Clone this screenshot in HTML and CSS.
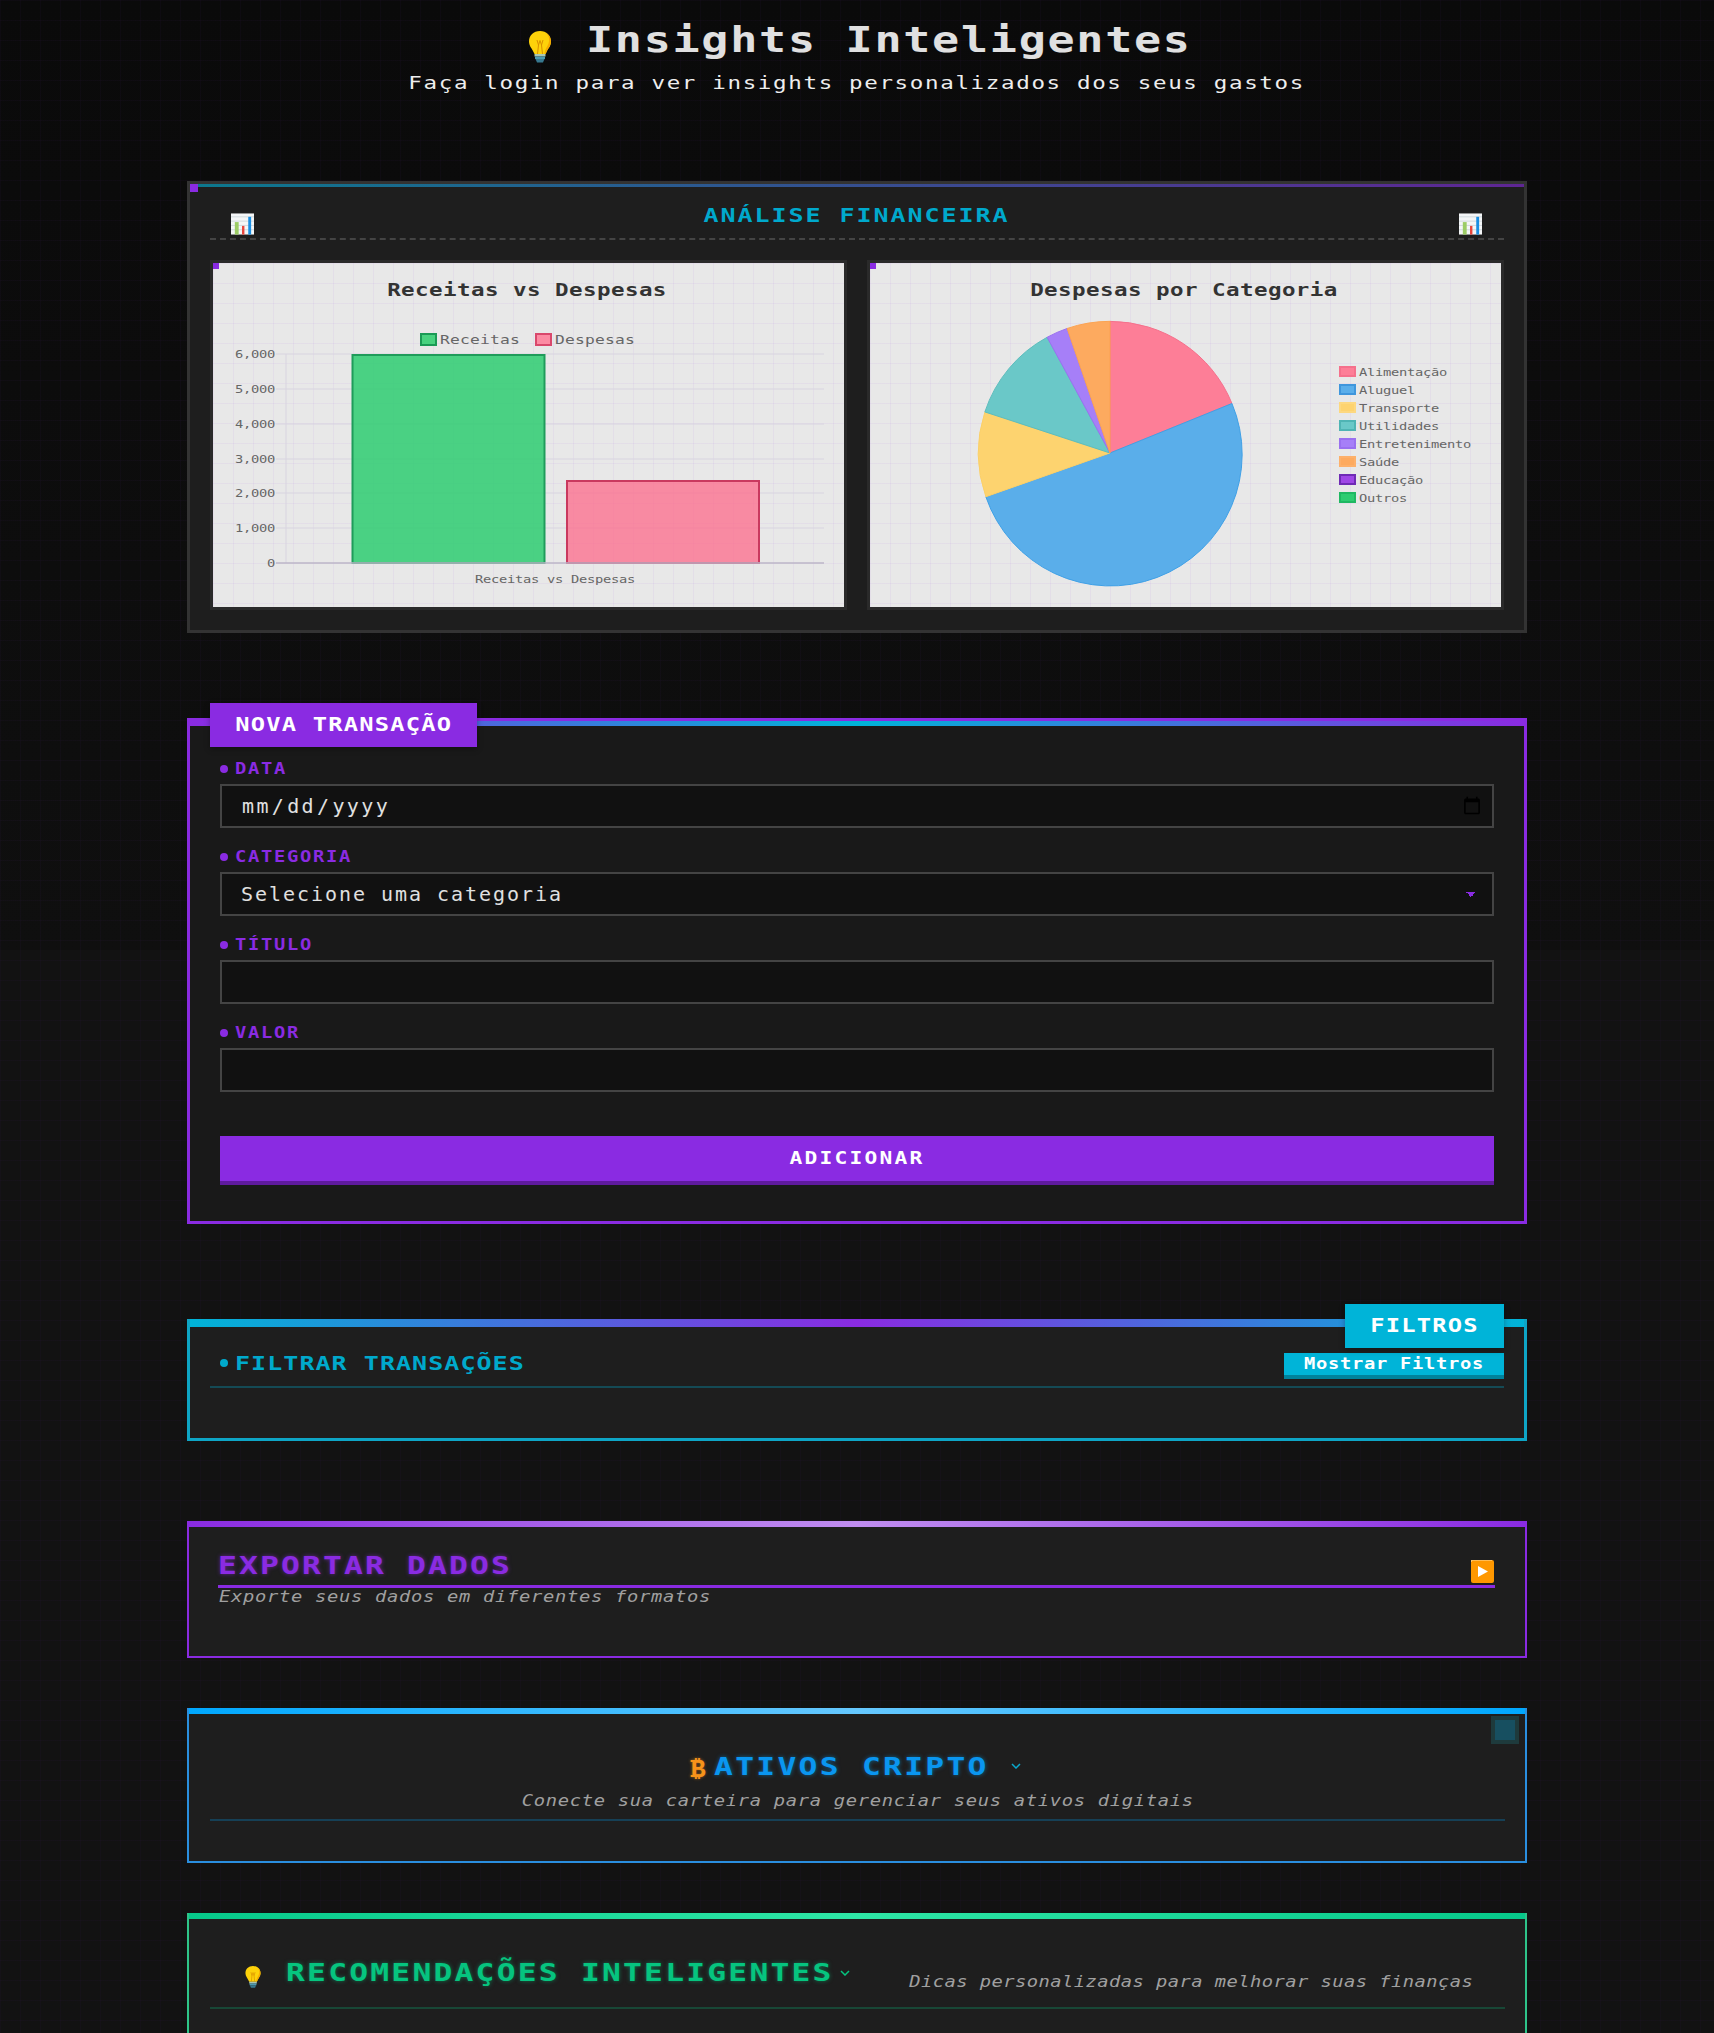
FILE: index.html
```html
<!DOCTYPE html>
<html lang="pt-BR">
<head>
  <meta charset="UTF-8">
  <title>Insights Inteligentes</title>
  <link rel="stylesheet" href="styles.css">
</head>
<body>
  <svg class="defs" width="0" height="0">
    <symbol id="bulb" viewBox="0 0 22 32">
      <path d="M11 0C4.500 0 0 4.500 0 10.500C0 15 3 17.500 4.500 21L5.500 23H16.500L17.500 21C19 17.500 22 15 22 10.500C22 4.500 17.500 0 11 0Z" fill="#fdd20a"/>
      <path d="M16 1.500C20 4 21 8 19.500 12.500C18.500 15.500 16 18 15.500 23H16.500L17.500 21C19 17.500 22 15 22 10.500C22 6.500 19.500 3 16 1.500Z" fill="#f6ab00"/>
      <path d="M8 9L9.500 14L11 9.500L12.500 14L14 9M9.500 14L8.500 23M12.500 14L13.500 23" fill="none" stroke="#d98f00" stroke-width="1"/>
      <rect x="5.500" y="23" width="11" height="2.500" fill="#a9c7b4"/>
      <rect x="6" y="25.500" width="10" height="2.500" fill="#4f9bb0"/>
      <path d="M6.500 28H15.500L14 31.500H8Z" fill="#37788f"/>
    </symbol>
    <symbol id="bars" viewBox="0 0 24 22">
      <rect width="24" height="22" fill="#f4f6f7"/>
      <path d="M0 3.500H24M0 8H24M0 12.500H24M0 17H24" stroke="#cfd8dc" stroke-width="1"/>
      <rect x="4" y="9" width="4" height="13" fill="#9ccc65"/>
      <rect x="11.500" y="13" width="2.500" height="9" fill="#e8453c"/>
      <rect x="18" y="3.500" width="3" height="18.500" fill="#1a8fe3"/>
    </symbol>
  </svg>

  <header class="page-head">
    <h1 class="page-title"><svg class="bulb-big"><use href="#bulb"/></svg><span class="wide">Insights Inteligentes</span></h1>
    <p class="page-sub"><span class="wide wide-center">Faça login para ver insights personalizados dos seus gastos</span></p>
  </header>

  <main class="container">

    <section class="panel analise">
      <div class="analise-head">
        <svg class="bars-icon"><use href="#bars"/></svg>
        <h2 class="analise-title"><span class="wide wide-center">ANÁLISE FINANCEIRA</span></h2>
        <svg class="bars-icon"><use href="#bars"/></svg>
      </div>
      <div class="charts">
        <div class="chart-card">
          <svg class="chart" viewBox="0 0 630 344">
            <text class="chart-title" x="314" y="33">Receitas vs Despesas</text>
            <rect x="208" y="71" width="15" height="11" fill="#48d27f" stroke="#1a9a55" stroke-width="2"/>
            <text class="chart-legend" x="227" y="81">Receitas</text>
            <rect x="323" y="71" width="15" height="11" fill="#fc8ba3" stroke="#d9486c" stroke-width="2"/>
            <text class="chart-legend" x="342" y="81">Despesas</text>
            <g class="chart-grid">
              <path d="M63 91H611M63 126H611M63 161H611M63 196H611M63 230H611M63 265H611"/>
              <path d="M73 91V300"/>
            </g>
            <rect x="139.500" y="92" width="192" height="208" fill="#2ecc71" fill-opacity="0.85" stroke="#1f9c5a" stroke-width="2"/>
            <rect x="354" y="218" width="192" height="82" fill="#ff6384" fill-opacity="0.7" stroke="#c9395f" stroke-width="2"/>
            <path class="chart-axis" d="M63 300H611"/>
            <text class="chart-tick" x="62" y="95">6,000</text>
            <text class="chart-tick" x="62" y="130">5,000</text>
            <text class="chart-tick" x="62" y="165">4,000</text>
            <text class="chart-tick" x="62" y="200">3,000</text>
            <text class="chart-tick" x="62" y="234">2,000</text>
            <text class="chart-tick" x="62" y="269">1,000</text>
            <text class="chart-tick" x="62" y="304">0</text>
            <text class="chart-xlabel" x="342" y="320">Receitas vs Despesas</text>
          </svg>
        </div>
        <div class="chart-card">
          <svg class="chart" viewBox="0 0 630 344">
            <text class="chart-title" x="314" y="33">Despesas por Categoria</text>
            <g class="pie" transform="translate(240 190) scale(0.99)">
              <path d="M0 0L0 -133A133 133 0 0 1 123.200 -50Z" fill="#fd7e97" stroke="#f5708c"/>
              <path d="M0 0L123.200 -50A133 133 0 1 1 -125.400 44.200Z" fill="#5aaeea" stroke="#3fa0e6"/>
              <path d="M0 0L-125.400 44.200A133 133 0 0 1 -126.400 -41.500Z" fill="#fdd36f" stroke="#fbcf68"/>
              <path d="M0 0L-126.400 -41.500A133 133 0 0 1 -63.500 -116.900Z" fill="#6ac8c8" stroke="#5cbcbc"/>
              <path d="M0 0L-63.500 -116.900A133 133 0 0 1 -43.300 -125.800Z" fill="#a67ff8" stroke="#9a70f0"/>
              <path d="M0 0L-43.300 -125.800A133 133 0 0 1 0 -133Z" fill="#fdaa5f" stroke="#fba352"/>
            </g>
            <rect x="470" y="104" width="15" height="9" fill="#fd7e97" stroke="#f5708c" stroke-width="2"/>
            <text class="pie-legend" x="489" y="113">Alimentação</text>
            <rect x="470" y="122" width="15" height="9" fill="#5aaeea" stroke="#3f96dc" stroke-width="2"/>
            <text class="pie-legend" x="489" y="131">Aluguel</text>
            <rect x="470" y="140" width="15" height="9" fill="#fdd36f" stroke="#fdd87f" stroke-width="2"/>
            <text class="pie-legend" x="489" y="149">Transporte</text>
            <rect x="470" y="158" width="15" height="9" fill="#6ac8c8" stroke="#4fb4b4" stroke-width="2"/>
            <text class="pie-legend" x="489" y="167">Utilidades</text>
            <rect x="470" y="176" width="15" height="9" fill="#a67ff8" stroke="#9a70f0" stroke-width="2"/>
            <text class="pie-legend" x="489" y="185">Entretenimento</text>
            <rect x="470" y="194" width="15" height="9" fill="#fdaa5f" stroke="#fdb06a" stroke-width="2"/>
            <text class="pie-legend" x="489" y="203">Saúde</text>
            <rect x="470" y="212" width="15" height="9" fill="#9f47e6" stroke="#6f2bb5" stroke-width="2"/>
            <text class="pie-legend" x="489" y="221">Educação</text>
            <rect x="470" y="230" width="15" height="9" fill="#2ecc71" stroke="#1fb862" stroke-width="2"/>
            <text class="pie-legend" x="489" y="239">Outros</text>
          </svg>
        </div>
      </div>
    </section>

    <section class="panel form-panel">
      <div class="tab tab-form"><span class="wide wide-center">NOVA TRANSAÇÃO</span></div>
      <form>
        <div class="field">
          <label for="data"><i class="dot"></i><span class="wide">DATA</span></label>
          <input type="date" id="data">
        </div>
        <div class="field">
          <label for="categoria"><i class="dot"></i><span class="wide">CATEGORIA</span></label>
          <select id="categoria"><option>Selecione uma categoria</option></select>
        </div>
        <div class="field">
          <label for="titulo"><i class="dot"></i><span class="wide">TÍTULO</span></label>
          <input type="text" id="titulo">
        </div>
        <div class="field">
          <label for="valor"><i class="dot"></i><span class="wide">VALOR</span></label>
          <input type="text" id="valor">
        </div>
        <button type="button" class="btn-add"><span class="wide wide-center">ADICIONAR</span></button>
      </form>
    </section>

    <section class="panel filtros">
      <div class="tab tab-filtros"><span class="wide wide-center">FILTROS</span></div>
      <div class="filtros-head">
        <h3 class="filtros-title"><i class="dot"></i><span class="wide">FILTRAR TRANSAÇÕES</span></h3>
        <button type="button" class="btn-filtros"><span class="wide wide-center">Mostrar Filtros</span></button>
      </div>
    </section>

    <section class="panel exportar">
      <div class="exportar-head">
        <h3 class="exportar-title"><span class="wide">EXPORTAR DADOS</span></h3>
        <svg class="play-icon" viewBox="0 0 23 23">
          <rect width="23" height="23" rx="2" fill="#ff9800"/>
          <path d="M0 2A2 2 0 0 1 2 0H21" fill="none" stroke="#ffc870" stroke-width="1.500"/>
          <path d="M7 6L17 11.500L7 17Z" fill="#fff"/>
        </svg>
      </div>
      <p class="note exportar-note"><span class="wide">Exporte seus dados em diferentes formatos</span></p>
    </section>

    <section class="panel cripto">
      <i class="cripto-toggle"></i>
      <div class="cripto-head">
        <div class="cripto-row">
          <span class="btc">₿</span>
          <h3 class="cripto-title"><span class="wide">ATIVOS CRIPTO</span></h3>
          <svg class="chevron chevron-blue" viewBox="0 0 10 6"><path d="M1 1L5 5L9 1"/></svg>
        </div>
        <p class="note note-center"><span class="wide wide-center">Conecte sua carteira para gerenciar seus ativos digitais</span></p>
      </div>
    </section>

    <section class="panel recomendacoes">
      <div class="rec-head">
        <div class="rec-left">
          <svg class="bulb-small"><use href="#bulb"/></svg>
          <h3 class="rec-title"><span class="wide">RECOMENDAÇÕES INTELIGENTES</span></h3>
          <svg class="chevron chevron-green" viewBox="0 0 10 6"><path d="M1 1L5 5L9 1"/></svg>
        </div>
        <p class="note rec-note"><span class="wide wide-right">Dicas personalizadas para melhorar suas finanças</span></p>
      </div>
    </section>

  </main>
</body>
</html>
```
FILE: styles.css
```css
* {
  box-sizing: border-box;
}

html, body {
  height: 2033px;
  overflow: hidden;
}

body {
  margin: 0;
  font-family: "DejaVu Sans Mono", "Liberation Mono", monospace;
  color: #e0e0e0;
  background-color: #121212;
  background-image:
    linear-gradient(rgba(138, 43, 226, 0.03) 1px, transparent 1px),
    linear-gradient(90deg, rgba(138, 43, 226, 0.03) 1px, transparent 1px),
    linear-gradient(#0a0a0a, #0f0f0f);
  background-size: 20px 20px, 20px 20px, 100% 950px;
  background-repeat: repeat, repeat, no-repeat;
}

h1, h2, h3, p {
  margin: 0;
}

.defs {
  display: block;
  height: 0;
}

/* a fonte pixelada e larga: estica o mono na horizontal */
.wide {
  display: inline-block;
  white-space: nowrap;
  transform: scaleX(1.25);
  transform-origin: left center;
}

.wide-center {
  transform-origin: center center;
}

.wide-right {
  transform-origin: right center;
}

/* cabecalho */
.page-head {
  height: 181px;
  padding-top: 17px;
  text-align: center;
}

.page-title {
  display: flex;
  justify-content: center;
  align-items: flex-start;
  height: 46px;
  font-size: 36px;
  line-height: 46px;
  letter-spacing: 1.4px;
  color: #e0e0e0;
}

.page-title .wide {
  margin-right: 114px;
}

.bulb-big {
  width: 22px;
  height: 32px;
  margin: 14px 35px 0 0;
}

.page-sub {
  margin-top: 8px;
  font-size: 18px;
  line-height: 24px;
  letter-spacing: 1.32px;
  color: #eee;
}

.container {
  width: 1340px;
  margin: 0 auto;
}

.panel {
  position: relative;
  background-color: #1e1e1e;
}

.panel::before {
  content: "";
  position: absolute;
  left: 0;
  right: 0;
  top: 0;
}

/* analise */
.analise {
  border: 3px solid #333;
  padding: 20px;
}

.analise::before {
  height: 3px;
  background: linear-gradient(90deg, rgba(0, 180, 216, 0.6), rgba(138, 43, 226, 0.6));
}

.analise::after {
  content: "";
  position: absolute;
  left: 0;
  top: 0;
  width: 8px;
  height: 8px;
  background-color: #8a2be2;
}

.analise-head {
  display: flex;
  justify-content: space-between;
  height: 36px;
  padding: 0 22px 3px 21px;
  border-bottom: 2px dashed #444;
  margin-bottom: 20px;
}

.bars-icon {
  width: 23px;
  height: 22px;
  align-self: flex-end;
}

.analise-title {
  font-size: 20px;
  font-weight: bold;
  line-height: 22px;
  letter-spacing: 1.56px;
  color: #00a9cc;
}

.charts {
  display: grid;
  grid-template-columns: 637px 637px;
  justify-content: space-between;
}

.chart-card {
  position: relative;
  height: 350px;
  border: 3px solid #2a2a2a;
  background-color: #e8e8e8;
  background-image:
    linear-gradient(rgba(138, 43, 226, 0.05) 1px, transparent 1px),
    linear-gradient(90deg, rgba(138, 43, 226, 0.05) 1px, transparent 1px);
  background-size: 20px 20px;
}

.chart-card::before {
  content: "";
  position: absolute;
  left: 0;
  top: 0;
  width: 6px;
  height: 6px;
  background-color: #8a2be2;
}

.chart {
  display: block;
  width: 630px;
  height: 344px;
}

.chart text {
  font-family: "DejaVu Sans Mono", "Liberation Mono", monospace;
  transform-box: fill-box;
  transform: scaleX(1.25);
  transform-origin: left center;
}

.chart-title {
  font-size: 18px;
  font-weight: bold;
  letter-spacing: 0.36px;
  text-anchor: middle;
  fill: #333;
}

.chart text.chart-title, .chart text.chart-xlabel {
  transform-origin: center center;
}

.chart-legend {
  font-size: 13px;
  letter-spacing: 0.17px;
  fill: #666;
}

.chart-grid path {
  fill: none;
  stroke: #d8d4e0;
  stroke-width: 1;
}

.chart-axis {
  fill: none;
  stroke: #bdb6c9;
  stroke-width: 1.5;
}

.chart-tick {
  font-size: 11px;
  letter-spacing: -0.22px;
  text-anchor: end;
  fill: #666;
}

.chart text.chart-tick {
  transform-origin: right center;
}

.chart-xlabel {
  font-size: 11px;
  letter-spacing: -0.22px;
  text-anchor: middle;
  fill: #666;
}

.pie-legend {
  font-size: 11px;
  letter-spacing: -0.22px;
  fill: #666;
}

/* abas */
.tab {
  position: absolute;
  top: -18px;
  height: 44px;
  line-height: 42px;
  font-size: 19px;
  font-weight: bold;
  letter-spacing: 0.96px;
  text-align: center;
  color: #fff;
  z-index: 1;
}

.tab-form {
  left: 20px;
  width: 267px;
  background-color: #8a2be2;
  box-shadow: 0 2px 6px rgba(0, 0, 0, 0.3);
}

.tab-filtros {
  right: 20px;
  width: 159px;
  background-color: #00b4d8;
  box-shadow: 0 2px 6px rgba(0, 0, 0, 0.3);
}

/* formulario */
.form-panel {
  margin-top: 85px;
  border: 3px solid #8a2be2;
  padding: 37px 30px 36px;
  background-color: #191919;
}

.form-panel::before {
  height: 5px;
  background: linear-gradient(90deg, #8a2be2, #00b4d8, #8a2be2);
}

.field {
  margin-bottom: 18px;
}

.field label {
  display: flex;
  align-items: center;
  gap: 7px;
  height: 20px;
  margin-bottom: 6px;
  padding-top: 1px;
  font-size: 15px;
  font-weight: bold;
  letter-spacing: 1.37px;
  color: #8a2be2;
}

.dot {
  display: block;
  flex: none;
  width: 8px;
  height: 8px;
  border-radius: 50%;
  background-color: currentColor;
}

.field input, .field select {
  display: block;
  width: 100%;
  height: 44px;
  padding: 0 8px 0 19px;
  border: 2px solid #444;
  border-radius: 0;
  background-color: #111;
  font-family: "DejaVu Sans Mono", "Liberation Mono", monospace;
  font-size: 20px;
  letter-spacing: 2.36px;
  color: #e0e0e0;
  outline: none;
}

.field select {
  appearance: none;
  letter-spacing: 1.96px;
  background-image:
    linear-gradient(45deg, transparent 50%, #8a2be2 50%),
    linear-gradient(135deg, #8a2be2 50%, transparent 50%);
  background-size: 5px 5px;
  background-position: right 21px center, right 16px center;
  background-repeat: no-repeat;
}

.btn-add {
  display: block;
  width: 100%;
  height: 49px;
  margin-top: 44px;
  padding: 0 0 2px;
  border: none;
  border-bottom: 4px solid #5f1a9e;
  background-color: #8a2be2;
  font-family: inherit;
  font-size: 17px;
  font-weight: bold;
  letter-spacing: 1.77px;
  color: #fff;
}

/* filtros */
.filtros {
  margin-top: 95px;
  border: 3px solid #0ea5c6;
  padding: 31px 20px 50px;
}

.filtros::before {
  top: -3px;
  height: 8px;
  background: linear-gradient(90deg, #00b4d8, #8a2be2, #00b4d8);
}

.filtros-head {
  display: flex;
  justify-content: space-between;
  align-items: flex-start;
  height: 35px;
  padding: 0 0 7px 10px;
  border-bottom: 2px solid rgba(0, 180, 216, 0.3);
}

.filtros-title {
  display: flex;
  align-items: center;
  gap: 7px;
  font-size: 20px;
  line-height: 20px;
  letter-spacing: 0.84px;
  color: #00a9cc;
}

.btn-filtros {
  width: 220px;
  height: 26px;
  padding: 0;
  border: none;
  border-bottom: 4px solid #00829c;
  background-color: #00b4d8;
  font-family: inherit;
  font-size: 15px;
  font-weight: bold;
  letter-spacing: 0.57px;
  color: #fff;
}

/* exportar */
.exportar {
  margin-top: 80px;
  border: 2px solid #8a2be2;
  padding: 29px 30px 50px 29px;
}

.exportar::before {
  top: -2px;
  height: 6px;
  background: linear-gradient(90deg, #8a2be2, #c08df0, #8a2be2);
}

.exportar-head {
  display: flex;
  justify-content: space-between;
  height: 36px;
  border-bottom: 3px solid #8a2be2;
}

.exportar-title {
  font-size: 25px;
  line-height: 28px;
  letter-spacing: 1.75px;
  color: #8a2be2;
  text-shadow: 0 0 4px rgba(138, 43, 226, 0.6);
}

.play-icon {
  width: 23px;
  height: 23px;
  margin: 8px 1px 0 0;
}

.note {
  font-size: 15px;
  font-style: italic;
  line-height: 18px;
  letter-spacing: 0.57px;
  color: #a0a0a0;
}

.exportar-note {
  padding-left: 1px;
}

.note-center {
  margin-top: 12px;
  text-align: center;
}

/* cripto */
.cripto {
  margin-top: 50px;
  border: 2px solid #2a8fe0;
  padding: 42px 20px 40px 21px;
}

.cripto::before {
  top: -2px;
  height: 6px;
  background: linear-gradient(90deg, #00a8ff, #66c8ff, #00a8ff);
}

.cripto-toggle {
  position: absolute;
  top: 6px;
  right: 6px;
  width: 28px;
  height: 28px;
  border: 4px solid #1e3a3c;
  background-color: #174f60;
}

.cripto-head {
  padding-bottom: 9px;
  border-bottom: 2px solid rgba(0, 168, 255, 0.25);
}

.cripto-row {
  display: flex;
  justify-content: center;
  align-items: center;
  height: 28px;
  padding-right: 4px;
}

.btc {
  margin: 6px 9px 0 0;
  font-size: 25px;
  line-height: 28px;
  font-weight: bold;
  color: #f7931a;
  text-shadow: 0 0 3px rgba(247, 147, 26, 0.6);
}

.cripto-title {
  padding-top: 1px;
  font-size: 25px;
  line-height: 28px;
  letter-spacing: 1.85px;
  color: #0a96f0;
  text-shadow: 0 0 4px rgba(0, 168, 255, 0.5);
}

.cripto-title .wide {
  margin-right: 55px;
}

.chevron {
  flex: none;
  width: 10px;
  height: 6px;
  fill: none;
  stroke-width: 1.5;
}

.chevron-blue {
  margin-left: 22px;
  stroke: #0aa8cc;
}

.chevron-green {
  margin-left: 7px;
  stroke: #06c47f;
}

/* recomendacoes */
.recomendacoes {
  margin-top: 50px;
  border: 2px solid #2ec48a;
  padding: 44px 20px 60px 21px;
}

.recomendacoes::before {
  top: -2px;
  height: 6px;
  background: linear-gradient(90deg, #06c88a, #2ee6a6, #06c88a);
}

.rec-head {
  display: flex;
  justify-content: space-between;
  padding: 0 32px 16px 35px;
  border-bottom: 2px solid rgba(6, 196, 127, 0.25);
}

.rec-left {
  display: flex;
  align-items: center;
  height: 28px;
}

.bulb-small {
  flex: none;
  width: 16px;
  height: 22px;
  margin: 8px 25px 0 0;
}

.rec-title {
  font-size: 25px;
  line-height: 28px;
  letter-spacing: 1.8px;
  color: #06c47f;
  text-shadow: 0 0 4px rgba(6, 196, 127, 0.5);
}

.rec-title .wide {
  margin-right: 109px;
}

.rec-note {
  margin-top: 14px;
  letter-spacing: 0.37px;
}
```
